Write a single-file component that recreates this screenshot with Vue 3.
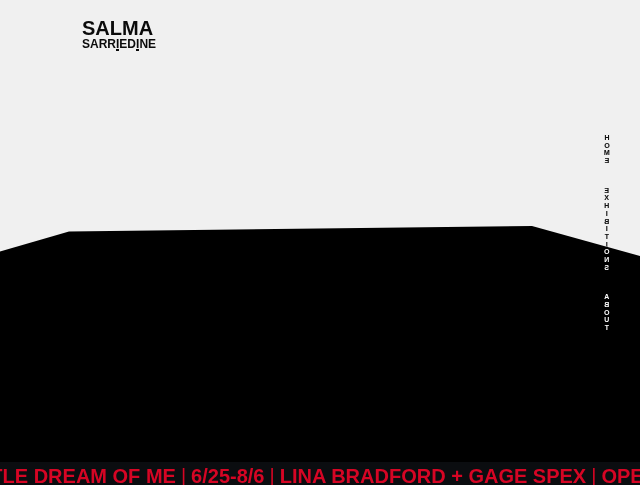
<script setup>
const links = ['HOME', 'EXHIBITIONS', 'ABOUT']
const news = ['TLE DREAM OF ME', '6/25-8/6', 'LINA BRADFORD + GAGE SPEX', 'OPE']
</script>

<template>
  <div class="page">
    <svg class="scene" viewBox="0 0 640 485" preserveAspectRatio="none" aria-hidden="true">
      <path d="M0 251.5L69 231.5L532 226L640 256V485H0Z" fill="#000" />
    </svg>
    <header class="header">
      <a class="logo" href="#">
        <span class="first">SALMA</span>
        <span class="last">SARR<span class="dotted">I</span>ED<span class="dotted">I</span>NE</span>
      </a>
    </header>
    <nav class="nav">
      <a v-for="link in links" :key="link" class="link" href="#" :aria-label="link">
        <span v-for="(letter, i) in link" :key="i" class="letter">{{ letter }}</span>
      </a>
    </nav>
    <footer class="ticker">
      <template v-for="(item, i) in news" :key="item">
        <span v-if="i" class="bar">|</span>
        <span class="news">{{ item }}</span>
      </template>
    </footer>
  </div>
</template>

<style>
body {
  margin: 0;
  background: #f0f0f0;
}
</style>

<style scoped>
.page {
  position: relative;
  display: flex;
  flex-direction: column;
  min-height: 100vh;
  overflow: hidden;
  background: #f0f0f0;
  font-family: "Liberation Sans", Arial, sans-serif;
  font-weight: 700;
}
.scene {
  position: absolute;
  inset: 0;
  width: 100%;
  height: 100%;
}
.header {
  position: relative;
  padding: 18px 82px 0;
}
.logo {
  display: inline-flex;
  flex-direction: column;
  color: #0b0b0b;
  text-decoration: none;
}
.first {
  font-size: 20px;
  line-height: 20px;
}
.last {
  font-size: 12px;
  line-height: 12px;
}
.dotted {
  position: relative;
}
.dotted::after {
  content: "";
  position: absolute;
  left: 0;
  bottom: 0;
  width: 3px;
  height: 2px;
  background: #0b0b0b;
}
.nav {
  display: flex;
  flex: 1;
  flex-direction: column;
  align-items: center;
  align-self: flex-end;
  gap: 22px;
  width: 10px;
  margin-right: 28px;
  padding-top: 84px;
  mix-blend-mode: difference;
}
.link {
  display: flex;
  flex-direction: column;
  align-items: center;
  color: #fff;
  font-size: 7px;
  line-height: 1.1;
  text-decoration: none;
  transform: scaleX(-1);
}
.ticker {
  position: relative;
  display: flex;
  justify-content: center;
  gap: 5px;
  overflow: hidden;
  box-sizing: border-box;
  height: 23px;
  padding: 3px 6px 0 0;
  background: #0b0d10;
  color: #d60524;
  font-size: 20px;
  line-height: 22px;
  white-space: nowrap;
}
.news,
.bar {
  flex: none;
}
.bar {
  font-weight: 400;
}
</style>
